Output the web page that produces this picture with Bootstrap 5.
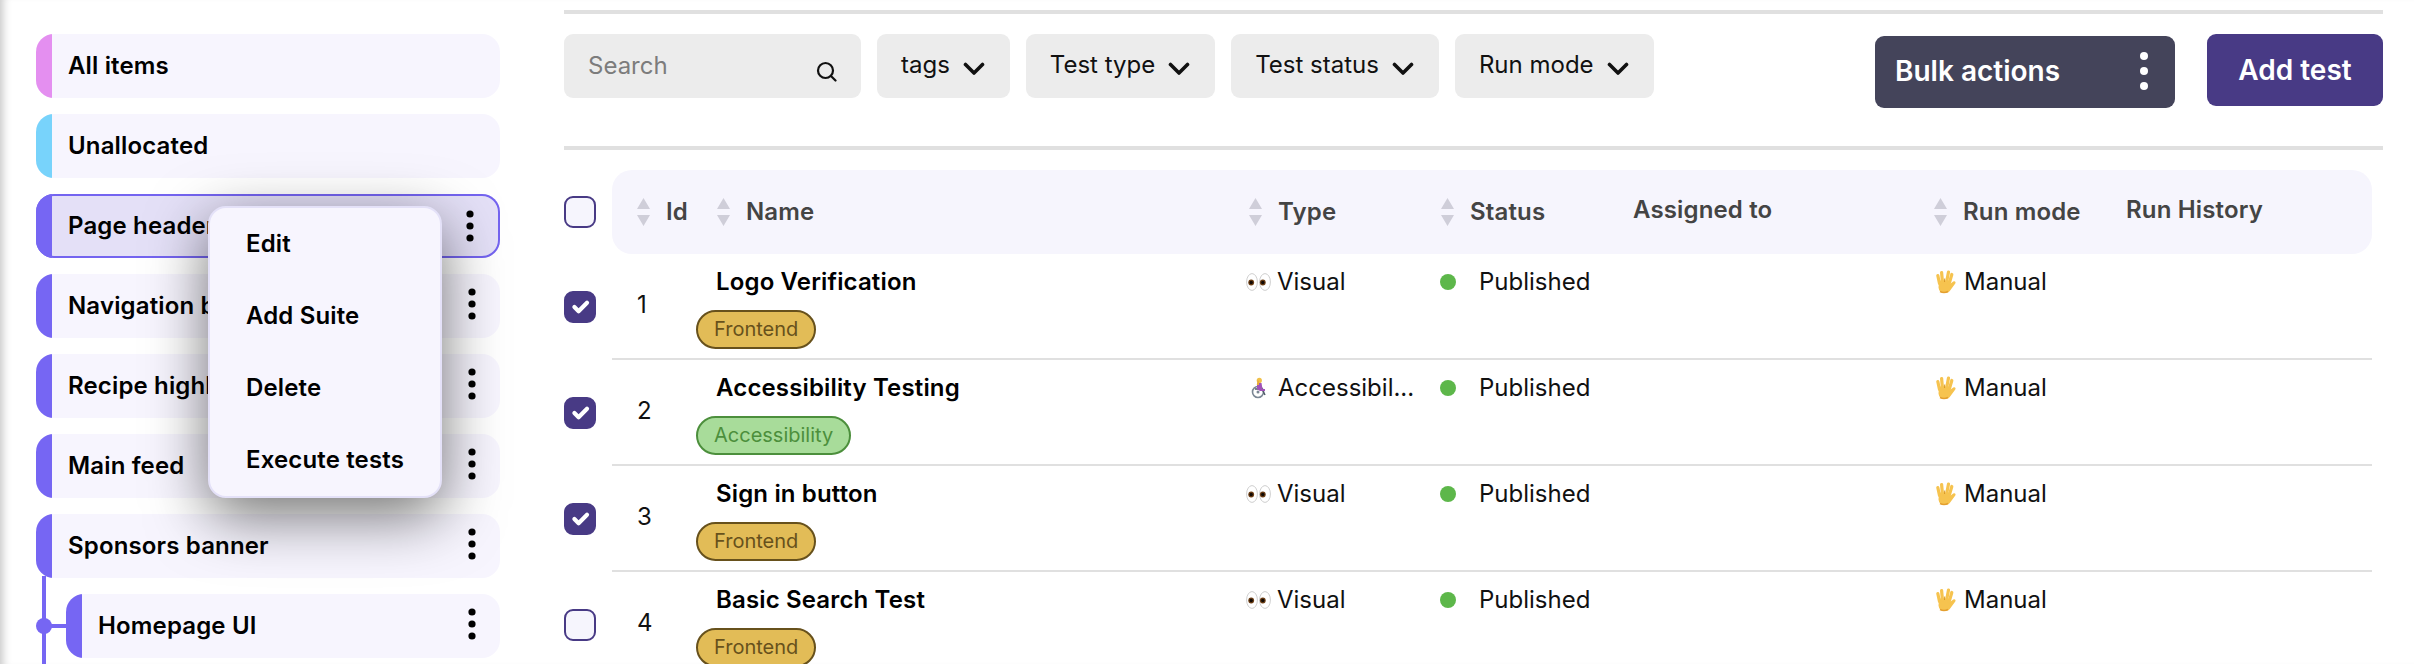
<!doctype html>
<html lang="en">
<head>
<meta charset="utf-8">
<title>Tests</title>
<link rel="stylesheet" href="https://cdn.jsdelivr.net/npm/bootstrap@5.3.0/dist/css/bootstrap.min.css">
<style>
html,body{height:664px;overflow:hidden;background:#fff}
body{font-family:Inter,"Liberation Sans",sans-serif;color:#111;font-size:24px}
.shell{height:664px;overflow:hidden;box-shadow:inset 10px 0 9px -7px rgba(0,0,0,.22)}
.side{width:500px;flex:none;padding:34px 0 0 36px}
.suite{height:64px;border-radius:18px;background:#f7f5fe;font-weight:600;font-size:24px;letter-spacing:.15px;color:#000}
.suite-clip{overflow:hidden;border-radius:18px;height:100%}
.bar{width:16px;height:100%;flex:none;background:#7666f3}
.bar-pink{background:#e48ff0}
.bar-sky{background:#78d3fb}
.suite-name{margin-left:16px;line-height:1;padding-bottom:1px;white-space:nowrap}
.vdots{width:10px;height:34px;flex:none;margin:0 23px 4px 0;fill:#000}
.suite-on{background:#e4e0f7;box-shadow:inset 0 0 0 2px #7464f0}
.suite-on .vdots{margin:0 25px 0 0}
.nested{padding-left:30px}
.tree{position:absolute;left:0;top:-18px;width:30px;height:88px;fill:#7666f3}
.actions-menu{left:172px;top:12px;width:234px;padding:0;border:2px solid #e4e1f8;border-radius:18px;background:#f7f5fe;box-shadow:0 18px 60px rgba(0,0,0,.55);z-index:5;overflow:hidden}
.actions-menu .dropdown-item{height:72px;display:flex;align-items:center;padding:0 0 0 36px;font-weight:600;font-size:24px;letter-spacing:.15px;color:#000}
.main{width:1819px;margin-left:64px;flex:none;padding-top:10px}
.rule{height:4px;background:#e0e0e0}
.toolbar{margin-top:20px;margin-bottom:40px;height:72px}
.field{height:64px;background:#ececec;border-radius:9px}
.search{width:297px;padding:0 24px 0 24px}
.search input{border:0;background:transparent;padding:0;box-shadow:none;font-size:24px;line-height:1;color:#111;height:60px;margin-bottom:2px}
.search input::placeholder{color:#7c7c7c}
.search svg{width:21px;height:21px;flex:none;margin-top:10px}
.filter{height:64px;background:#ececec;border:0;border-radius:9px;font-size:24px;color:#111;padding:0 25px 3px 24px;gap:13px}
.filter:hover{background:#ececec;color:#111}
.filter svg{width:22px;height:14px;flex:none;margin-top:9px}
.btn-bulk,.btn-add{height:72px;border:0;border-radius:9px;color:#fff;font-weight:600;font-size:28px}
.btn-bulk{width:300px;background:#44445a;margin-top:2px;padding:0 26px 3px 20px}
.btn-bulk:hover{background:#44445a;color:#fff}
.btn-add{width:176px;background:#483a85;margin-left:32px;padding:0}
.btn-add:hover{background:#483a85;color:#fff}
.btn-bulk svg{width:10px;height:40px;fill:#fff;flex:none}
.tablehead{margin-top:20px}
.pick{width:48px;flex:none}
.pick .form-check-input{width:32px;height:32px;margin:0;border:2px solid #483a85;border-radius:9px;background-color:#f6f5fd}
.pick .form-check-input:checked{background-color:#483a85}
.headbar{flex:1;height:84px;background:#f6f5fd;border-radius:20px;margin-right:11px;padding-left:25px;display:grid;grid-template-columns:80px 532px 192px 192px 301px 192px 1fr;align-items:center;font-weight:600;font-size:24px;letter-spacing:.15px;color:#444}
.sorter{gap:16px}
.sorter svg{width:13px;height:28px;fill:#cfced9;flex:none}
.plain-head{padding-bottom:4px}
.testrow{flex:1;height:106px;margin-right:11px;border-bottom:2px solid #e0e0e0;padding-left:25px;display:grid;grid-template-columns:59px 550px 194px 193px 301px 192px 1fr;font-size:24px;color:#111}
.idcell{align-self:center;padding-bottom:2px}
.title{font-weight:600;letter-spacing:.15px;color:#000;line-height:28px;margin:14px 0 14px 20px}
.tag{display:block;width:max-content;height:39px;line-height:35px;padding:0 16px;border-radius:20px;border:2px solid;font-size:20px;font-weight:400}
.tag-front{background:#e2bc57;border-color:#67511c;color:#67511c}
.tag-a11y{background:#a8dc9a;border-color:#4c8f3c;color:#4c8f3c}
.linecell{height:28px;margin-top:14px;white-space:nowrap}
.glyph{flex:none}
.eyes{width:25px;height:18px;margin-right:6px}
.roller{width:25px;height:22px;margin-right:7px}
.vulcan{width:24px;height:24px;margin-right:6px}
.state{width:16px;height:16px;border-radius:50%;background:#5db74a;margin-right:23px;flex:none}
</style>
</head>
<body>
<svg width="0" height="0" class="position-absolute">
  <symbol id="dots3" viewBox="0 0 10 34"><circle cx="5" cy="5" r="3.6"/><circle cx="5" cy="17" r="3.6"/><circle cx="5" cy="29" r="3.6"/></symbol>
  <symbol id="sortpair" viewBox="0 0 13 28"><path d="M6.5 0 13 11H0zM0 17h13L6.5 28z"/></symbol>
  <symbol id="chev" viewBox="0 0 22 14"><path d="M2.5 2.5 11 11l8.500-8.500" fill="none" stroke="#111" stroke-width="3.600" stroke-linecap="round" stroke-linejoin="round"/></symbol>
  <symbol id="eyepair" viewBox="0 0 25 18">
    <ellipse cx="6" cy="9" rx="5.400" ry="8.400" fill="#fff" stroke="#cfcfcf" stroke-width="1"/>
    <ellipse cx="19" cy="9" rx="5.400" ry="8.400" fill="#fff" stroke="#cfcfcf" stroke-width="1"/>
    <circle cx="5.200" cy="9.500" r="2.900" fill="#6b3d14"/><circle cx="5.200" cy="9.500" r="1.700" fill="#120a04"/>
    <circle cx="16.800" cy="9.500" r="2.900" fill="#6b3d14"/><circle cx="16.800" cy="9.500" r="1.700" fill="#120a04"/>
  </symbol>
  <symbol id="wheelie" viewBox="0 0 25 22">
    <circle cx="12" cy="15" r="5.500" fill="none" stroke="#7b8794" stroke-width="1.600"/>
    <circle cx="12" cy="15" r="1.500" fill="#7b8794"/>
    <path d="M9 12h7l3 6" fill="none" stroke="#4f5b68" stroke-width="1.500"/>
    <path d="M11 6h4.500l1 6H19v2h-5l-3-2z" fill="#a052b8"/>
    <circle cx="13.300" cy="3.400" r="2.600" fill="#f0c04a"/>
    <path d="M11.500 3 10.800 8 13 8 13 4z" fill="#e8ad3a"/>
  </symbol>
  <symbol id="salute" viewBox="3 0.500 20 24">
    <path d="M6 11 5.500 18q.5 5 6 5.500 4.500 0 6-3l4.800-6.500q1-1.800-.8-2.300-1.200-.2-2.200 1L16.500 15 16 11z" fill="#f6c34f"/>
    <g fill="none" stroke="#f6c34f" stroke-width="3.200" stroke-linecap="round">
      <path d="M4.800 6 6.500 14"/><path d="M8.600 3 9.500 13"/><path d="M15.500 2.500 13.500 13"/><path d="M18.800 5 16.200 14"/>
    </g>
    <path d="M11.500 12.500 11.700 9" stroke="#d99a2b" stroke-width="1" fill="none"/>
    <path d="M7 22q4 2 8 0" stroke="#e39f2f" stroke-width="1.500" fill="none"/>
  </symbol>
</svg>

<div class="shell d-flex">
  <aside class="side d-flex flex-column gap-3">
    <div class="suite"><div class="suite-clip d-flex align-items-center"><span class="bar bar-pink"></span><span class="suite-name">All items</span></div></div>
    <div class="suite"><div class="suite-clip d-flex align-items-center"><span class="bar bar-sky"></span><span class="suite-name">Unallocated</span></div></div>
    <div class="suite suite-on position-relative">
      <div class="suite-clip d-flex align-items-center"><span class="bar"></span><span class="suite-name flex-grow-1">Page header</span><svg class="vdots"><use href="#dots3"/></svg></div>
      <ul class="dropdown-menu show actions-menu">
        <li><a class="dropdown-item" href="#">Edit</a></li>
        <li><a class="dropdown-item" href="#">Add Suite</a></li>
        <li><a class="dropdown-item" href="#">Delete</a></li>
        <li><a class="dropdown-item" href="#">Execute tests</a></li>
      </ul>
    </div>
    <div class="suite"><div class="suite-clip d-flex align-items-center"><span class="bar"></span><span class="suite-name flex-grow-1">Navigation bar</span><svg class="vdots"><use href="#dots3"/></svg></div></div>
    <div class="suite"><div class="suite-clip d-flex align-items-center"><span class="bar"></span><span class="suite-name flex-grow-1">Recipe highlights</span><svg class="vdots"><use href="#dots3"/></svg></div></div>
    <div class="suite"><div class="suite-clip d-flex align-items-center"><span class="bar"></span><span class="suite-name flex-grow-1">Main feed</span><svg class="vdots"><use href="#dots3"/></svg></div></div>
    <div class="suite"><div class="suite-clip d-flex align-items-center"><span class="bar"></span><span class="suite-name flex-grow-1">Sponsors banner</span><svg class="vdots"><use href="#dots3"/></svg></div></div>
    <div class="nested position-relative">
      <svg class="tree" viewBox="0 0 30 88"><path d="M6 0h4v88H6z"/><circle cx="8" cy="50" r="8"/><path d="M8 48h22v4H8z"/></svg>
      <div class="suite"><div class="suite-clip d-flex align-items-center"><span class="bar"></span><span class="suite-name flex-grow-1">Homepage UI</span><svg class="vdots"><use href="#dots3"/></svg></div></div>
    </div>
  </aside>

  <main class="main">
    <div class="rule"></div>
    <div class="toolbar d-flex align-items-start gap-3">
      <label class="field search d-flex align-items-center">
        <input class="form-control" type="text" placeholder="Search" aria-label="Search">
        <svg viewBox="0 0 21 21" fill="none" stroke="#111" stroke-width="2.200" stroke-linecap="round"><circle cx="9.500" cy="9.500" r="7.500"/><path d="m15 15 4.500 4.500"/></svg>
      </label>
      <button class="btn filter d-flex align-items-center" type="button">tags <svg><use href="#chev"/></svg></button>
      <button class="btn filter d-flex align-items-center" type="button">Test type <svg><use href="#chev"/></svg></button>
      <button class="btn filter d-flex align-items-center" type="button">Test status <svg><use href="#chev"/></svg></button>
      <button class="btn filter d-flex align-items-center" type="button">Run mode <svg><use href="#chev"/></svg></button>
      <div class="ms-auto d-flex align-items-start">
        <button class="btn btn-bulk d-flex align-items-center justify-content-between" type="button">Bulk actions <svg viewBox="0 0 10 40"><circle cx="5" cy="5" r="4"/><circle cx="5" cy="20" r="4"/><circle cx="5" cy="35" r="4"/></svg></button>
        <button class="btn btn-add" type="button">Add test</button>
      </div>
    </div>
    <div class="rule"></div>

    <div class="tablehead d-flex align-items-center">
      <div class="pick d-flex"><input class="form-check-input" type="checkbox" aria-label="Select all"></div>
      <div class="headbar">
        <div class="sorter d-flex align-items-center"><svg><use href="#sortpair"/></svg>Id</div>
        <div class="sorter d-flex align-items-center"><svg><use href="#sortpair"/></svg>Name</div>
        <div class="sorter d-flex align-items-center"><svg><use href="#sortpair"/></svg>Type</div>
        <div class="sorter d-flex align-items-center"><svg><use href="#sortpair"/></svg>Status</div>
        <div class="plain-head">Assigned to</div>
        <div class="sorter d-flex align-items-center"><svg><use href="#sortpair"/></svg>Run mode</div>
        <div class="plain-head">Run History</div>
      </div>
    </div>

    <div class="d-flex align-items-center">
      <div class="pick d-flex"><input class="form-check-input" type="checkbox" checked aria-label="Select test 1"></div>
      <div class="testrow">
        <div class="idcell">1</div>
        <div><div class="title">Logo Verification</div><span class="tag tag-front">Frontend</span></div>
        <div class="linecell d-flex align-items-center"><svg class="glyph eyes"><use href="#eyepair"/></svg>Visual</div>
        <div class="linecell d-flex align-items-center"><span class="state"></span>Published</div>
        <div></div>
        <div class="linecell d-flex align-items-center"><svg class="glyph vulcan"><use href="#salute"/></svg>Manual</div>
        <div></div>
      </div>
    </div>
    <div class="d-flex align-items-center">
      <div class="pick d-flex"><input class="form-check-input" type="checkbox" checked aria-label="Select test 2"></div>
      <div class="testrow">
        <div class="idcell">2</div>
        <div><div class="title">Accessibility Testing</div><span class="tag tag-a11y">Accessibility</span></div>
        <div class="linecell d-flex align-items-center"><svg class="glyph roller"><use href="#wheelie"/></svg>Accessibil...</div>
        <div class="linecell d-flex align-items-center"><span class="state"></span>Published</div>
        <div></div>
        <div class="linecell d-flex align-items-center"><svg class="glyph vulcan"><use href="#salute"/></svg>Manual</div>
        <div></div>
      </div>
    </div>
    <div class="d-flex align-items-center">
      <div class="pick d-flex"><input class="form-check-input" type="checkbox" checked aria-label="Select test 3"></div>
      <div class="testrow">
        <div class="idcell">3</div>
        <div><div class="title">Sign in button</div><span class="tag tag-front">Frontend</span></div>
        <div class="linecell d-flex align-items-center"><svg class="glyph eyes"><use href="#eyepair"/></svg>Visual</div>
        <div class="linecell d-flex align-items-center"><span class="state"></span>Published</div>
        <div></div>
        <div class="linecell d-flex align-items-center"><svg class="glyph vulcan"><use href="#salute"/></svg>Manual</div>
        <div></div>
      </div>
    </div>
    <div class="d-flex align-items-center">
      <div class="pick d-flex"><input class="form-check-input" type="checkbox" aria-label="Select test 4"></div>
      <div class="testrow">
        <div class="idcell">4</div>
        <div><div class="title">Basic Search Test</div><span class="tag tag-front">Frontend</span></div>
        <div class="linecell d-flex align-items-center"><svg class="glyph eyes"><use href="#eyepair"/></svg>Visual</div>
        <div class="linecell d-flex align-items-center"><span class="state"></span>Published</div>
        <div></div>
        <div class="linecell d-flex align-items-center"><svg class="glyph vulcan"><use href="#salute"/></svg>Manual</div>
        <div></div>
      </div>
    </div>
  </main>
</div>
<script src="https://cdn.jsdelivr.net/npm/bootstrap@5.3.0/dist/js/bootstrap.bundle.min.js"></script>
</body>
</html>
